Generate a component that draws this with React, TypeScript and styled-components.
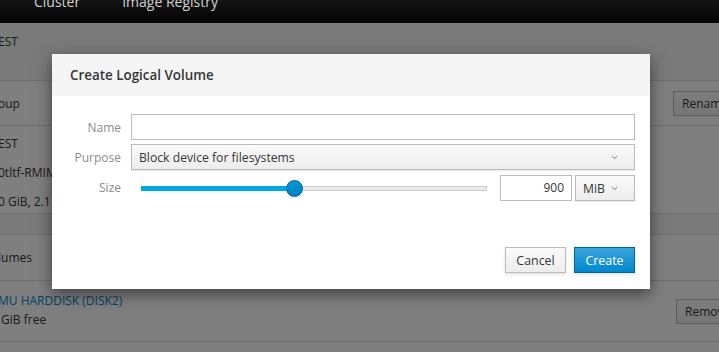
import React from 'react';
import styled, { createGlobalStyle } from 'styled-components';

const GlobalStyle = createGlobalStyle`
  html, body {
    margin: 0;
    padding: 0;
    overflow: hidden;
  }
  body {
    font-family: 'Open Sans', 'Noto Sans', sans-serif;
    font-size: 12px;
    color: #363636;
  }
`;

const Shell = styled.div`
  width: 719px;
  height: 352px;
  display: flex;
  flex-direction: column;
  overflow: hidden;
`;

const Navbar = styled.div`
  height: 23px;
  flex: none;
  display: flex;
  gap: 42px;
  padding-left: 34px;
  background: linear-gradient(#141414, #030303);
  overflow: hidden;
`;

const NavLink = styled.span`
  margin-top: -8px;
  line-height: 20px;
  font-size: 14px;
  color: #d1d1d1;
`;

const Frame = styled.div`
  position: relative;
  flex: 1;
  overflow: hidden;
`;

const Page = styled.div`
  background: #f5f5f5;
  display: flex;
  flex-direction: column;
  height: 100%;
`;

const Panel = styled.div`
  background: #fff;
  border-top: 1px solid #ddd;
  border-bottom: 1px solid #ddd;
  display: flex;
  flex-direction: column;
`;

const Crumbs = styled.div`
  height: 57px;
  flex: none;
  padding-top: 9px;
  box-sizing: border-box;
  line-height: 19px;
`;

const Row = styled.div<{ $h: number }>`
  height: ${(p) => p.$h}px;
  box-sizing: border-box;
  border-top: 1px solid #ddd;
  display: flex;
  align-items: center;
  justify-content: space-between;
  &:first-child {
    border-top: none;
  }
`;

const Lines = styled.div<{ $gap: number; $shift?: number }>`
  display: flex;
  flex-direction: column;
  gap: ${(p) => p.$gap}px;
  margin: ${(p) => p.$shift ?? 0}px 0 0 -2px;
  line-height: 19px;
`;

const Cut = styled.span`
  margin-left: -2px;
`;

const PageLink = styled.span`
  color: #0088ce;
`;

const PageButton = styled.span<{ $pull: number }>`
  height: 25px;
  box-sizing: border-box;
  border: 1px solid #bbb;
  background: linear-gradient(#fafafa, #ededed);
  padding: 0 8px;
  display: flex;
  align-items: center;
  font-size: 12px;
  margin-right: -${(p) => p.$pull}px;
  width: 76px;
`;

const Overlay = styled.div`
  position: absolute;
  inset: 0;
  background: rgba(0, 0, 0, 0.5);
  padding: 31px 0 0 52px;
`;

const Dialog = styled.div`
  width: 598px;
  background: #fff;
  box-shadow: 0 5px 15px rgba(0, 0, 0, 0.5);
`;

const DialogHeader = styled.div`
  height: 42px;
  background: #f5f5f5;
  padding: 0 18px;
  display: flex;
  align-items: center;
`;

const Title = styled.h4`
  margin: 0;
  font-size: 13.4px;
  font-weight: 600;
  color: #363636;
`;

const DialogBody = styled.div`
  padding: 18px 15px 20px 15px;
  display: grid;
  grid-template-columns: 54px 1fr;
  column-gap: 10px;
  row-gap: 4px;
  align-items: center;
`;

const Label = styled.label`
  text-align: right;
  color: #8b8d8f;
  font-size: 12px;
`;

const TextInput = styled.div`
  height: 26px;
  box-sizing: border-box;
  border: 1px solid #bbb;
  background: #fff;
`;

const Select = styled.div<{ $w?: number }>`
  height: 26px;
  box-sizing: border-box;
  border: 1px solid #bbb;
  background: linear-gradient(#fafafa, #ededed);
  box-shadow: 0 1px 1px rgba(3, 3, 3, 0.08);
  display: flex;
  align-items: center;
  justify-content: space-between;
  padding: 0 16px 0 7px;
  color: #363636;
  font-size: 12.2px;
  ${(p) => (p.$w ? `width: ${p.$w}px; flex: none;` : '')}
`;

const SizeRow = styled.div`
  display: flex;
  align-items: center;
  height: 26px;
  margin-top: 1px;
`;

const SliderTrack = styled.div`
  position: relative;
  flex: 1;
  margin: 0 13px 0 10px;
  height: 5px;
  box-sizing: border-box;
  border: 1px solid #ccc;
  background: #ececec;
`;

const SliderFill = styled.div`
  position: absolute;
  left: -1px;
  top: -1px;
  bottom: -1px;
  background: #00a8e1;
`;

const Thumb = styled.div`
  position: absolute;
  top: 50%;
  width: 17px;
  height: 17px;
  margin: -8.5px 0 0 -8.5px;
  border-radius: 50%;
  box-sizing: border-box;
  border: 1px solid #00659c;
  background: linear-gradient(#0098d9, #007ec1);
`;

const NumberInput = styled.div`
  width: 72px;
  height: 26px;
  box-sizing: border-box;
  border: 1px solid #bbb;
  background: #fff;
  display: flex;
  align-items: center;
  justify-content: flex-end;
  padding-right: 7px;
  margin-right: 3px;
  margin-top: -1px;
`;

const DialogFooter = styled.div`
  display: flex;
  justify-content: flex-end;
  gap: 8px;
  padding: 26px 15px 16px;
`;

const Button = styled.button<{ $primary?: boolean }>`
  height: 26px;
  width: 61px;
  box-sizing: border-box;
  font-family: inherit;
  font-size: 12.4px;
  padding: 0;
  border: 1px solid ${(p) => (p.$primary ? '#00659c' : '#bbb')};
  background: ${(p) =>
    p.$primary ? 'linear-gradient(#39a5dc, #0088ce)' : 'linear-gradient(#fafafa, #ededed)'};
  color: ${(p) => (p.$primary ? '#fff' : '#363636')};
  box-shadow: 0 2px 3px rgba(3, 3, 3, 0.1);
`;

const Caret = () => (
  <svg width="7" height="5" viewBox="0 0 7 5">
    <path d="M0.8 1 L3.5 3.6 L6.2 1" fill="none" stroke="#72767b" strokeWidth="1" />
  </svg>
);

const sliderValue = 900 / 2028;

export default function App() {
  return (
    <Shell>
      <GlobalStyle />
      <Navbar>
        <NavLink>Cluster</NavLink>
        <NavLink>Image Registry</NavLink>
      </Navbar>
      <Frame>
        <Page>
          <Crumbs>
            <Cut>EST</Cut>
          </Crumbs>
          <Panel>
            <Row $h={44}>
              <Cut>oup</Cut>
              <PageButton $pull={30}>Rename</PageButton>
            </Row>
            <Row $h={88}>
              <Lines $gap={10} $shift={5}>
                <span>EST</span>
                <span>0tltf-RMIM</span>
                <span>0 GiB, 2.1</span>
              </Lines>
            </Row>
          </Panel>
          <Crumbs style={{ height: 20, padding: 0 }} />
          <Panel>
            <Row $h={45}>
              <Cut>lumes</Cut>
            </Row>
            <Row $h={61}>
              <Lines $gap={0} $shift={-2}>
                <PageLink>MU HARDDISK (DISK2)</PageLink>
                <span>&nbsp;GiB free</span>
              </Lines>
              <PageButton $pull={33}>Remove</PageButton>
            </Row>
            <Row $h={30} />
          </Panel>
        </Page>
        <Overlay>
          <Dialog>
            <DialogHeader>
              <Title>Create Logical Volume</Title>
            </DialogHeader>
            <DialogBody>
              <Label>Name</Label>
              <TextInput />
              <Label>Purpose</Label>
              <Select>
                <span>Block device for filesystems</span>
                <Caret />
              </Select>
              <Label>Size</Label>
              <SizeRow>
                <SliderTrack>
                  <SliderFill style={{ width: `${sliderValue * 100}%` }} />
                  <Thumb style={{ left: `${sliderValue * 100}%` }} />
                </SliderTrack>
                <NumberInput>900</NumberInput>
                <Select $w={60}>
                  <span>MiB</span>
                  <Caret />
                </Select>
              </SizeRow>
            </DialogBody>
            <DialogFooter>
              <Button>Cancel</Button>
              <Button $primary>Create</Button>
            </DialogFooter>
          </Dialog>
        </Overlay>
      </Frame>
    </Shell>
  );
}
